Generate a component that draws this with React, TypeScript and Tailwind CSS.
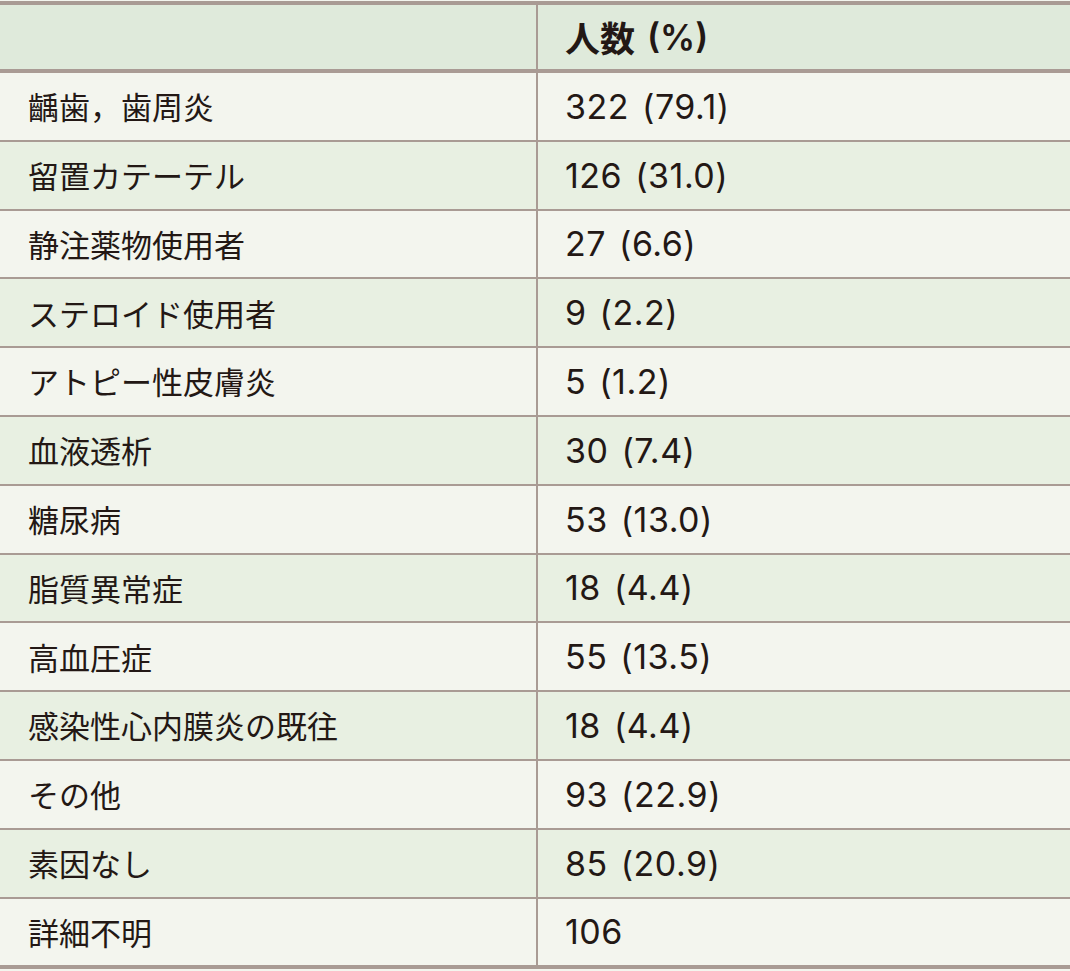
import React from 'react';

// 表：素因と人数
interface Row {
    label: string;
    value: string;
}

const rows: Row[] = [
    { label: '齲歯，歯周炎', value: '322（79.1）' },
    { label: '留置カテーテル', value: '126（31.0）' },
    { label: '静注薬物使用者', value: '27（6.6）' },
    { label: 'ステロイド使用者', value: '9（2.2）' },
    { label: 'アトピー性皮膚炎', value: '5（1.2）' },
    { label: '血液透析', value: '30（7.4）' },
    { label: '糖尿病', value: '53（13.0）' },
    { label: '脂質異常症', value: '18（4.4）' },
    { label: '高血圧症', value: '55（13.5）' },
    { label: '感染性心内膜炎の既往', value: '18（4.4）' },
    { label: 'その他', value: '93（22.9）' },
    { label: '素因なし', value: '85（20.9）' },
    { label: '詳細不明', value: '106' },
];

const jp = "font-['Noto_Sans_CJK_JP',sans-serif]";
const num = "font-['Inter','Noto_Sans_CJK_JP',sans-serif]";

function splitValue(v: string) {
    const i = v.indexOf('（');
    if (i < 0) return { n: v, p: '' };
    return { n: v.slice(0, i), p: v.slice(i + 1, -1) };
}

export default function App() {
    return (
        <div className="w-[1070px] h-[971px] bg-[#f3f5ee] pt-px text-[#231815]">
            <div className="border-t-4 border-b-4 border-[#a99b94]">
                {/* Header */}
                <div className="grid grid-cols-[536px_1fr] h-[68px] bg-[#dfeadb] border-b-4 border-[#a99b94]">
                    <div />
                    <div className={`border-l-2 border-[#a99b94] pl-[27px] flex items-center text-[35px] font-bold ${jp}`}>
                        <span>人数</span>
                        <span className={`ml-[12px] ${num} font-semibold`}>(%)</span>
                    </div>
                </div>

                {/* Body rows */}
                {rows.map((r, idx) => {
                    const { n, p } = splitValue(r.value);
                    const last = idx === rows.length - 1;
                    return (
                        <div
                            key={r.label}
                            className={`grid grid-cols-[536px_1fr] ${idx % 2 === 0 ? 'bg-[#f3f5ee]' : 'bg-[#e8f0e2]'} ${last ? 'h-[66.8px]' : 'h-[68.8px] border-b-2 border-[#a99b94]'}`}
                        >
                            <div className={`pl-[28px] flex items-center text-[31px] ${jp}`}>{r.label}</div>
                            <div className={`border-l-2 border-[#a99b94] pl-[27px] flex items-center text-[34px] tracking-[0.5px] ${num}`}>
                                <span>{n}</span>
                                {p && <span className="ml-[13px]">({p})</span>}
                            </div>
                        </div>
                    );
                })}
            </div>
        </div>
    );
}
